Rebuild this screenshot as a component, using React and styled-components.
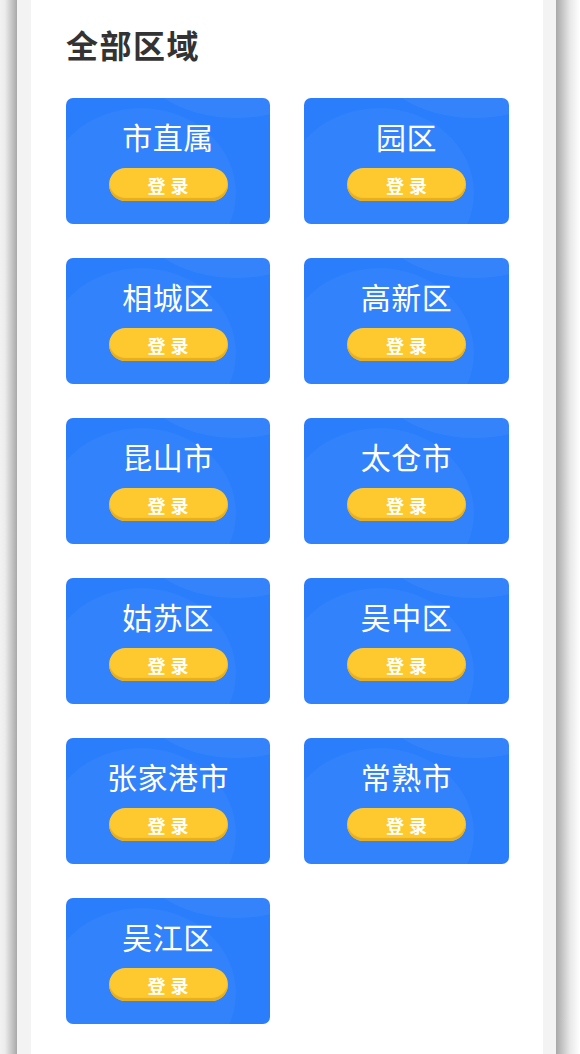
import React from "react";
import styled, { createGlobalStyle } from "styled-components";

const Global = createGlobalStyle`
  html, body { margin: 0; padding: 0; }
  body {
    font-family: "Noto Sans CJK SC", "Noto Sans", sans-serif;
    background: #ffffff;
  }
`;

const Frame = styled.div`
  display: flex;
  min-height: 1054px;
  background: linear-gradient(
    to right,
    #f2f2f2 0px,
    #ececec 5px,
    #a9a9a9 17px,
    #f3f3f3 17px,
    #f3f3f3 556px,
    #a8a8a8 556px,
    #e8e8e8 570px,
    #ffffff 580px
  );
`;

const Panel = styled.div`
  margin-left: 31px;
  width: 512px;
  background: #ffffff;
  box-sizing: border-box;
  padding: 22px 0 0 35px;
`;

const Title = styled.h2`
  margin: 0;
  font-size: 32px;
  line-height: 44px;
  font-weight: 700;
  color: #333333;
  letter-spacing: 1.5px;
`;

const Grid = styled.div`
  display: grid;
  grid-template-columns: 204px 205px;
  column-gap: 34px;
  row-gap: 34px;
  margin-top: 32px;
`;

const Card = styled.div`
  position: relative;
  overflow: hidden;
  height: 126px;
  border-radius: 7px;
  background: #2a7dfb;
  display: flex;
  flex-direction: column;
  align-items: center;
  box-sizing: border-box;
  padding-top: 18px;
  &::before {
    content: "";
    position: absolute;
    left: -20px;
    top: 10px;
    width: 190px;
    height: 170px;
    border-radius: 50%;
    background: rgba(255, 255, 255, 0.04);
  }
  &::after {
    content: "";
    position: absolute;
    left: 70px;
    top: -110px;
    width: 200px;
    height: 130px;
    border-radius: 50%;
    background: rgba(255, 255, 255, 0.05);
  }
`;

const Name = styled.div`
  position: relative;
  z-index: 1;
  font-size: 30px;
  line-height: 40px;
  color: #ffffff;
  letter-spacing: 0.5px;
`;

const LoginButton = styled.div`
  position: relative;
  z-index: 1;
  margin-top: 12px;
  width: 119px;
  height: 33px;
  border-radius: 17px;
  background: #fdc92f;
  box-shadow: inset 0 -3px 1px #e6ad1f;
  display: flex;
  align-items: center;
  justify-content: center;
  color: #ffffff;
  font-size: 18px;
  font-weight: 700;
  letter-spacing: 5px;
  text-indent: 5px;
`;

const regions = [
  "市直属",
  "园区",
  "相城区",
  "高新区",
  "昆山市",
  "太仓市",
  "姑苏区",
  "吴中区",
  "张家港市",
  "常熟市",
  "吴江区",
];

export default function App() {
  return (
    <>
      <Global />
      <Frame>
        <Panel>
          <Title>全部区域</Title>
          <Grid>
            {regions.map((r) => (
              <Card key={r}>
                <Name>{r}</Name>
                <LoginButton>登录</LoginButton>
              </Card>
            ))}
          </Grid>
        </Panel>
      </Frame>
    </>
  );
}
